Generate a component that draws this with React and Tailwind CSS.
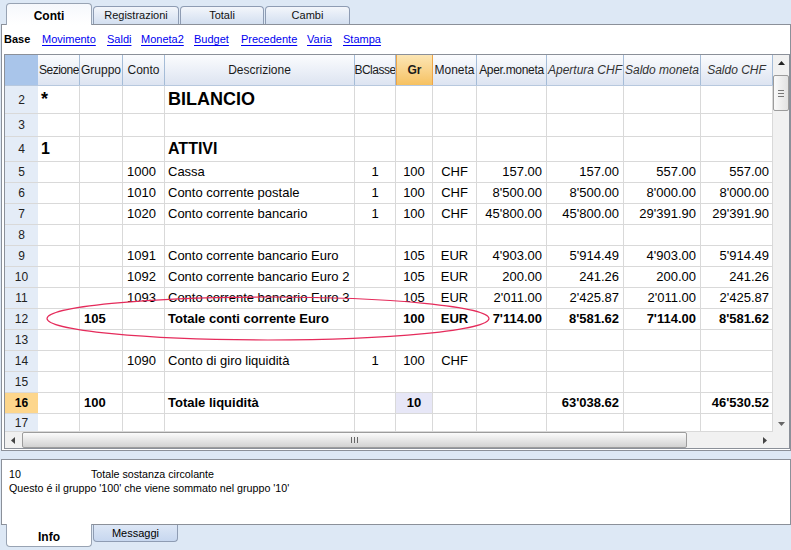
import React from 'react'

const cols = [
  { k: 'sez', w: 'w-[42px]', cls: 'justify-start pl-[3px]' },
  { k: 'grp', w: 'w-[43px]', cls: 'justify-start pl-[4px]' },
  { k: 'conto', w: 'w-[42px]', cls: 'justify-start pl-[4px]' },
  { k: 'desc', w: 'w-[190px]', cls: 'justify-start pl-[3px]' },
  { k: 'bc', w: 'w-[41px]', cls: 'justify-center' },
  { k: 'gr', w: 'w-[37px]', cls: 'justify-center' },
  { k: 'mon', w: 'w-[44px]', cls: 'justify-center' },
  { k: 'a', w: 'w-[70px]', cls: 'justify-end pr-[4px]' },
  { k: 'b', w: 'w-[77px]', cls: 'justify-end pr-[4px]' },
  { k: 'c', w: 'w-[77px]', cls: 'justify-end pr-[4px]' },
  { k: 'd', w: 'w-[72px]', cls: 'justify-end pr-[3px]' },
]

const headers = [
  { label: 'Sezione', w: 'w-[42px]', cls: 'justify-start pl-px tracking-[-0.5px]' },
  { label: 'Gruppo', w: 'w-[43px]', cls: 'justify-center' },
  { label: 'Conto', w: 'w-[42px]', cls: 'justify-center' },
  { label: 'Descrizione', w: 'w-[190px]', cls: 'justify-center' },
  { label: 'BClasse', w: 'w-[41px]', cls: 'justify-center tracking-[-0.5px]' },
  { label: 'Gr', w: 'w-[37px]', cls: 'justify-center', gr: true },
  { label: 'Moneta', w: 'w-[44px]', cls: 'justify-center' },
  { label: 'Aper.moneta', w: 'w-[70px]', cls: 'justify-center tracking-[-0.3px]' },
  { label: 'Apertura CHF', w: 'w-[77px]', cls: 'justify-center italic text-[#333]' },
  { label: 'Saldo moneta', w: 'w-[77px]', cls: 'justify-center italic text-[#333]' },
  { label: 'Saldo CHF', w: 'w-[72px]', cls: 'justify-center italic text-[#333]' },
]

const rows = [
  { n: 2, h: 'h-[28px]', look: 'title', sez: '*', desc: 'BILANCIO' },
  { n: 3, h: 'h-[23px]' },
  { n: 4, h: 'h-[25px]', look: 'sub', sez: '1', desc: 'ATTIVI' },
  { n: 5, conto: '1000', desc: 'Cassa', bc: '1', gr: '100', mon: 'CHF', a: '157.00', b: '157.00', c: '557.00', d: '557.00' },
  { n: 6, conto: '1010', desc: 'Conto corrente postale', bc: '1', gr: '100', mon: 'CHF', a: "8'500.00", b: "8'500.00", c: "8'000.00", d: "8'000.00" },
  { n: 7, conto: '1020', desc: 'Conto corrente bancario', bc: '1', gr: '100', mon: 'CHF', a: "45'800.00", b: "45'800.00", c: "29'391.90", d: "29'391.90" },
  { n: 8 },
  { n: 9, conto: '1091', desc: 'Conto corrente bancario Euro', gr: '105', mon: 'EUR', a: "4'903.00", b: "5'914.49", c: "4'903.00", d: "5'914.49" },
  { n: 10, conto: '1092', desc: 'Conto corrente bancario Euro 2', gr: '105', mon: 'EUR', a: '200.00', b: '241.26', c: '200.00', d: '241.26' },
  { n: 11, conto: '1093', desc: 'Conto corrente bancario Euro 3', gr: '105', mon: 'EUR', a: "2'011.00", b: "2'425.87", c: "2'011.00", d: "2'425.87" },
  { n: 12, look: 'bold', grp: '105', desc: 'Totale conti corrente Euro', gr: '100', mon: 'EUR', a: "7'114.00", b: "8'581.62", c: "7'114.00", d: "8'581.62" },
  { n: 13 },
  { n: 14, conto: '1090', desc: 'Conto di giro liquidità', bc: '1', gr: '100', mon: 'CHF' },
  { n: 15 },
  { n: 16, look: 'bold', sel: true, grp: '100', desc: 'Totale liquidità', gr: '10', b: "63'038.62", d: "46'530.52" },
  { n: 17, h: 'h-[18px]' },
]

const links = [
  { t: 'Movimento', w: 'w-[65px]' },
  { t: 'Saldi', w: 'w-[34px]' },
  { t: 'Moneta2', w: 'w-[53px]' },
  { t: 'Budget', w: 'w-[47px]' },
  { t: 'Precedente', w: 'w-[66px]' },
  { t: 'Varia', w: 'w-[36px]' },
  { t: 'Stampa', w: 'w-[50px]' },
]

function TopTabs() {
  return (
    <div className="flex h-[24px] items-end">
      <div className="relative z-10 -mb-px ml-[6px] flex h-[22px] w-[86px] items-start justify-center rounded-t-[4px] border border-b-0 border-[#98a3b3] bg-gradient-to-b from-[#f6f8fc] to-white pt-[3px] text-[12px] font-bold">
        Conti
      </div>
      {[
        ['Registrazioni', 'w-[86px]'],
        ['Totali', 'w-[84px]'],
        ['Cambi', 'w-[85px]'],
      ].map(([t, w]) => (
        <div
          key={t}
          className={`ml-px flex h-[18px] ${w} items-center justify-center rounded-t-[4px] border border-b-0 border-[#8e9cb3] bg-gradient-to-b from-[#f3f6fb] to-[#d3dff0] text-[11px] text-[#111]`}
        >
          {t}
        </div>
      ))}
    </div>
  )
}

function Toolbar() {
  return (
    <div className="flex h-[29px] items-center pl-[2px] text-[11px]">
      <span className="w-[38px] font-bold">Base</span>
      {links.map((l) => (
        <span key={l.t} className={`${l.w} text-[#0000f0] underline underline-offset-2`}>
          {l.t}
        </span>
      ))}
    </div>
  )
}

function HeaderRow() {
  return (
    <div className="flex h-[31px] border-b border-[#b7c8de] text-[12px] text-[#1a1a1a]">
      <div className="w-[33px] shrink-0 bg-[#a9c5ea]" />
      {headers.map((h) =>
        h.gr ? (
          <div
            key={h.label}
            className={`${h.w} flex shrink-0 items-center justify-center border-x border-[#eda548] bg-gradient-to-b from-[#fce6b4] to-[#f6c160] text-[12px] font-bold`}
          >
            {h.label}
          </div>
        ) : (
          <div
            key={h.label}
            className={`${h.w} flex shrink-0 items-center overflow-hidden whitespace-nowrap border-r border-[#a5bcd7] bg-gradient-to-b from-[#fbfcfe] to-[#dde4f1] ${h.cls}`}
          >
            {h.label}
          </div>
        )
      )}
    </div>
  )
}

function Row({ r }) {
  const h = r.h || 'h-[21px]'
  let text = 'text-[13px]'
  if (r.look === 'title') text = 'text-[18px] font-bold'
  if (r.look === 'sub') text = 'text-[16px] font-bold'
  if (r.look === 'bold') text = 'text-[13px] font-bold'
  return (
    <div className={`flex ${h} border-b border-[#d9d9d9]`}>
      <div
        className={`flex w-[33px] shrink-0 items-center justify-center text-[12px] ${
          r.sel ? 'bg-[#fdd68c] font-bold' : 'bg-[#e4ecf7] text-[#222]'
        }`}
      >
        {r.n}
      </div>
      {cols.map((c) => (
        <div
          key={c.k}
          className={`${c.w} flex shrink-0 items-center overflow-hidden whitespace-nowrap border-r border-[#d9d9d9] ${c.cls} ${text} ${
            r.sel && c.k === 'gr' ? 'bg-[#e7e7f7]' : ''
          }`}
        >
          {r[c.k]}
        </div>
      ))}
    </div>
  )
}

function VScroll() {
  return (
    <div className="flex w-[16px] shrink-0 flex-col bg-[#f1f1f1]">
      <div className="flex h-[16px] items-center justify-center">
        <svg width="7" height="4" viewBox="0 0 7 4">
          <polygon points="0,4 3.5,0 7,4" fill="#222" />
        </svg>
      </div>
      <div className="mt-[4px] flex h-[36px] w-full flex-col items-center justify-center gap-[2px] rounded-[2px] border border-[#9c9c9c] bg-gradient-to-r from-[#fafafa] to-[#e2e2e2]">
        <div className="h-px w-[6px] bg-[#777]" />
        <div className="h-px w-[6px] bg-[#777]" />
        <div className="h-px w-[6px] bg-[#777]" />
      </div>
      <div className="flex-1" />
      <div className="flex h-[16px] items-center justify-center">
        <svg width="7" height="4" viewBox="0 0 7 4">
          <polygon points="0,0 7,0 3.5,4" fill="#666" />
        </svg>
      </div>
    </div>
  )
}

function HScroll() {
  return (
    <div className="flex w-[768px] items-center bg-[#f1f1f1]">
      <div className="flex h-[16px] w-[16px] items-center justify-center">
        <svg width="4" height="7" viewBox="0 0 4 7">
          <polygon points="4,0 4,7 0,3.5" fill="#444" />
        </svg>
      </div>
      <div className="ml-px flex h-[16px] w-[665px] items-center justify-center gap-[2px] rounded-[2px] border border-[#9c9c9c] bg-gradient-to-b from-[#fbfbfb] to-[#d2d2d2]">
        <div className="h-[6px] w-px bg-[#666]" />
        <div className="h-[6px] w-px bg-[#666]" />
        <div className="h-[6px] w-px bg-[#666]" />
      </div>
      <div className="flex-1" />
      <div className="flex h-[16px] w-[16px] items-center justify-center">
        <svg width="4" height="7" viewBox="0 0 4 7">
          <polygon points="0,0 4,3.5 0,7" fill="#444" />
        </svg>
      </div>
    </div>
  )
}

function Sheet() {
  return (
    <div className="ml-[2px] flex h-[395px] w-[786px] flex-col border border-[#8b9099]">
      <div className="flex h-[377px]">
        <div className="w-[768px] shrink-0 overflow-hidden">
          <HeaderRow />
          {rows.map((r) => (
            <Row key={r.n} r={r} />
          ))}
        </div>
        <VScroll />
      </div>
      <div className="flex h-[16px]">
        <HScroll />
        <div className="w-[16px] bg-[#f1f1f1]" />
      </div>
    </div>
  )
}

function InfoPanel() {
  return (
    <div className="ml-px h-[66px] w-[790px] border border-[#8b9099] bg-white pl-[7px] pt-[7px] text-[10.7px] leading-[14px]">
      <div className="flex">
        <span className="w-[82px]">10</span>
        <span>Totale sostanza circolante</span>
      </div>
      <div>Questo é il gruppo '100' che viene sommato nel gruppo '10'</div>
    </div>
  )
}

function BottomTabs() {
  return (
    <div className="flex items-start">
      <div className="relative z-10 -mt-px ml-[6px] flex h-[23px] w-[86px] items-center justify-center rounded-b-[4px] border border-t-0 border-[#98a3b3] bg-white pt-[3px] text-[12px] font-bold">
        Info
      </div>
      <div className="ml-px flex h-[17px] w-[85px] items-center justify-center rounded-b-[4px] border border-t-0 border-[#8e9cb3] bg-gradient-to-b from-[#dde7f6] to-[#c7d7ef] pt-px text-[11px]">
        Messaggi
      </div>
    </div>
  )
}

export default function App() {
  return (
    <div className="relative h-[550px] w-[791px] overflow-hidden bg-[#dde8f5] font-['Liberation_Sans',Arial,sans-serif] text-black">
      <TopTabs />
      <div className="ml-px flex h-[427px] w-[790px] flex-col border border-[#8b9099] bg-white">
        <Toolbar />
        <Sheet />
      </div>
      <div className="h-[8px]" />
      <InfoPanel />
      <BottomTabs />
      {/* red ellipse drawn over the sheet */}
      <svg className="pointer-events-none absolute left-0 top-0" width="791" height="550">
        <ellipse cx="268" cy="318.5" rx="221" ry="21.5" fill="none" stroke="#e52b5b" strokeWidth="1.2" />
      </svg>
    </div>
  )
}
